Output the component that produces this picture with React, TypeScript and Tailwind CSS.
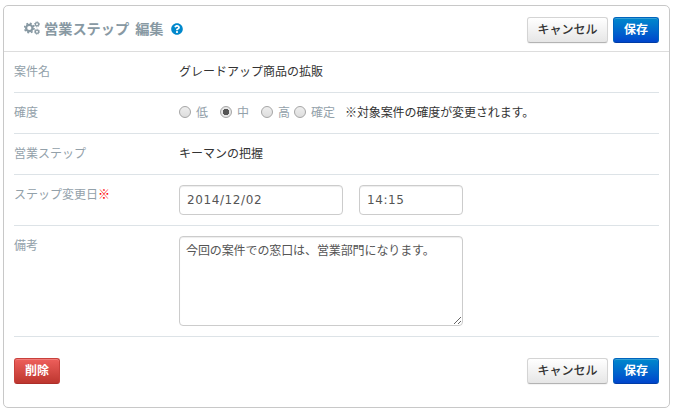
import { useState } from "react";
import type { ReactNode } from "react";
import { clsx } from "clsx";
import { FaQuestionCircle } from "react-icons/fa";

const LEVELS = [
  { label: "低", className: "w-[41px]" },
  { label: "中", className: "w-[41px]" },
  { label: "高", className: "w-[33px]" },
  { label: "確定", className: "w-[51px]" },
];

type ButtonProps = { variant: "default" | "primary" | "danger"; children: ReactNode };

function Button({ variant, children }: ButtonProps) {
  return (
    <button
      type="button"
      className={clsx(
        "h-[26px] rounded-[3px] border pb-[2px] text-[12px] leading-[22px] whitespace-nowrap",
        variant === "default" &&
          "w-[81px] border-[#d4d4d4] border-b-[#b3b3b3] bg-gradient-to-b from-white to-[#e6e6e6] font-medium text-[#333] shadow-[0_1px_1px_rgba(0,0,0,0.05)]",
        variant === "primary" &&
          "w-[46px] border-[#0064bd] border-b-[#003ca5] bg-gradient-to-b from-[#0088cc] to-[#0044cc] font-bold text-white shadow-[inset_0_1px_0_rgba(255,255,255,0.2)]",
        variant === "danger" &&
          "w-[46px] border-[#c9403b] border-b-[#ac2e29] bg-gradient-to-b from-[#ee5f5b] to-[#bd362f] font-bold text-white shadow-[inset_0_1px_0_rgba(255,255,255,0.2)]"
      )}
    >
      {children}
    </button>
  );
}

function Actions() {
  return (
    <div className="flex gap-[5px]">
      <Button variant="default">キャンセル</Button>
      <Button variant="primary">保存</Button>
    </div>
  );
}

function CogsIcon() {
  return (
    <svg viewBox="0 0 16 14" className="mr-[4px] h-[14px] w-[16px]" fill="none" stroke="currentColor">
      <circle cx="5.3" cy="7" r="3.2" strokeWidth="2.2" />
      <circle cx="5.3" cy="7" r="4.7" strokeWidth="1.6" strokeDasharray="1.9 1.79" />
      <circle cx="13" cy="3.3" r="1.6" strokeWidth="1.3" />
      <circle cx="13" cy="3.3" r="2.5" strokeWidth="1" strokeDasharray="1.1 0.86" />
      <circle cx="13" cy="10.7" r="1.6" strokeWidth="1.3" />
      <circle cx="13" cy="10.7" r="2.5" strokeWidth="1" strokeDasharray="1.1 0.86" />
    </svg>
  );
}

function Row({ label, required, className, children }: { label: string; required?: boolean; className: string; children: ReactNode }) {
  return (
    <div className={clsx("mx-[10px] flex items-start border-b border-[#dde3e7] pt-[10px]", className)}>
      <div className="-mt-px w-[165px] shrink-0 leading-5 text-[#93a1aa]">
        {label}
        {required && <span className="text-[#ff0000]">※</span>}
      </div>
      {children}
    </div>
  );
}

const FIELD =
  "rounded-[4px] border border-[#ccc] bg-white text-[#555] outline-none shadow-[inset_0_1px_1px_rgba(0,0,0,0.075)]";

export default function App() {
  const [level, setLevel] = useState("中");

  return (
    <div className="h-[416px] w-[675px] bg-white pt-[5px] pl-[3px] font-['Noto_Sans_CJK_JP',sans-serif] text-[12px] text-[#333]">
      <div className="flex h-[403px] w-[667px] flex-col rounded-[5px] border border-[#c8c8c8]">
        {/* ヘッダー */}
        <div className="flex h-[46px] items-center justify-between border-b border-[#ddd] pr-[10px] pl-[20px] pt-[3px]">
          <h1 className="-mt-[5px] flex items-center text-[14.2px] leading-5 font-bold text-[#8899a3]">
            <CogsIcon />
            <span>営業ステップ</span>
            <span className="ml-[6px]">編集</span>
            <FaQuestionCircle className="mt-[2px] ml-[7px] h-[12px] w-[12px] text-[#0088cc]" />
          </h1>
          <Actions />
        </div>

        <Row label="案件名" className="h-[41px]">
          <span className="-mt-px leading-5">グレードアップ商品の拡販</span>
        </Row>

        <Row label="確度" className="h-[41px]">
          <div className="-mt-px flex h-5 items-center">
            {LEVELS.map((item) => (
              <label key={item.label} className={clsx("flex items-center leading-5 whitespace-nowrap text-[#93a1aa]", item.className)}>
                <input
                  type="radio"
                  name="level"
                  checked={level === item.label}
                  onChange={() => setLevel(item.label)}
                  className="mr-[5px] h-[12px] w-[12px] shrink-0 appearance-none rounded-full border border-[#a5a5a5] bg-gradient-to-b from-[#eee] to-[#ddd] checked:bg-[radial-gradient(circle,#555_0_3px,#e6e6e6_3.5px)]"
                />
                {item.label}
              </label>
            ))}
            <span className="leading-5 tracking-[-0.1px]">※対象案件の確度が変更されます。</span>
          </div>
        </Row>

        <Row label="営業ステップ" className="h-[41px]">
          <span className="-mt-px leading-5">キーマンの把握</span>
        </Row>

        <Row label="ステップ変更日" required className="h-[51px]">
          <div className="flex gap-[16px]">
            <input defaultValue="2014/12/02" className={clsx(FIELD, "h-[30px] w-[164px] px-[7px] font-['DejaVu_Sans',sans-serif] tracking-[0.6px]")} />
            <input defaultValue="14:15" className={clsx(FIELD, "h-[30px] w-[104px] px-[7px] font-['DejaVu_Sans',sans-serif] tracking-[0.6px]")} />
          </div>
        </Row>

        <Row label="備考" className="h-[111px]">
          <textarea
            defaultValue="今回の案件での窓口は、営業部門になります。"
            className={clsx(FIELD, "h-[90px] w-[284px] resize px-[6px] py-[3px] leading-5 tracking-[-0.1px]")}
          />
        </Row>

        {/* フッター */}
        <div className="flex justify-between px-[10px] pt-[21px]">
          <Button variant="danger">削除</Button>
          <Actions />
        </div>
      </div>
    </div>
  );
}
